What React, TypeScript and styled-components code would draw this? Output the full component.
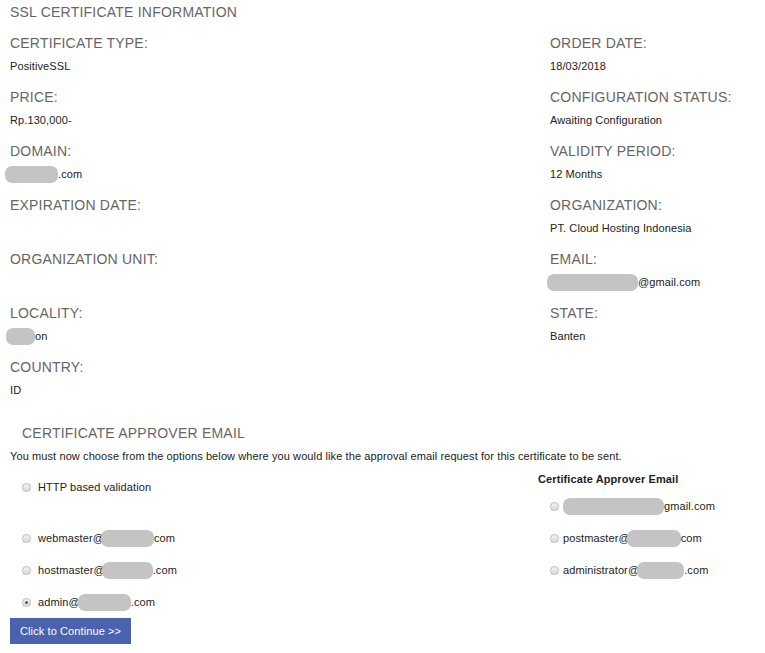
import React from "react";
import styled, { createGlobalStyle } from "styled-components";

const GlobalStyle = createGlobalStyle`
  body {
    margin: 0;
    background: #fff;
    font-family: "Liberation Sans", Arial, sans-serif;
  }
`;

type Field = { label: string; value?: React.ReactNode };

// grey smudge that hides private parts of the text
const Blur: React.FC<{ w: number; shift?: number }> = ({ w, shift = 0 }) => (
  <Redact style={{ width: w, marginLeft: shift }} />
);

const left: Field[] = [
  { label: "CERTIFICATE TYPE:", value: "PositiveSSL" },
  { label: "PRICE:", value: "Rp.130,000-" },
  { label: "DOMAIN:", value: <><Blur w={53} shift={-5} />.com</> },
  { label: "EXPIRATION DATE:" },
  { label: "ORGANIZATION UNIT:" },
  { label: "LOCALITY:", value: <><Blur w={29} shift={-4} />on</> },
  { label: "COUNTRY:", value: "ID" },
];

const right: Field[] = [
  { label: "ORDER DATE:", value: "18/03/2018" },
  { label: "CONFIGURATION STATUS:", value: "Awaiting Configuration" },
  { label: "VALIDITY PERIOD:", value: "12 Months" },
  { label: "ORGANIZATION:", value: "PT. Cloud Hosting Indonesia" },
  { label: "EMAIL:", value: <><Blur w={91} shift={-3} />@gmail.com</> },
  { label: "STATE:", value: "Banten" },
];

const FieldBlock: React.FC<Field> = ({ label, value }) => (
  <Block>
    <Label>{label}</Label>
    <Value>{value}</Value>
  </Block>
);

const Option: React.FC<{
  checked?: boolean;
  gap: number;
  children: React.ReactNode;
}> = ({ checked, gap, children }) => (
  <OptionRow $gap={gap}>
    <Radio $checked={checked} />
    <span>{children}</span>
  </OptionRow>
);

const App: React.FC = () => {
  const rows = Math.max(left.length, right.length);
  return (
    <Page>
      <GlobalStyle />
      <Title>SSL CERTIFICATE INFORMATION</Title>
      <InfoGrid>
        {Array.from({ length: rows }).map((_, i) => (
          <React.Fragment key={i}>
            {left[i] ? <FieldBlock {...left[i]} /> : <div />}
            {right[i] ? <FieldBlock {...right[i]} /> : <div />}
          </React.Fragment>
        ))}
      </InfoGrid>

      <SubTitle>CERTIFICATE APPROVER EMAIL</SubTitle>
      <Intro>
        You must now choose from the options below where you would like the
        approval email request for this certificate to be sent.
      </Intro>

      <ApproverGrid>
        <Cell $top={3}>
          <Option gap={7}>HTTP based validation</Option>
        </Cell>
        <Cell>
          <ColHeading>Certificate Approver Email</ColHeading>
          <Option gap={4}>
            <Blur w={101} />gmail.com
          </Option>
        </Cell>
        <Option gap={7}>
          webmaster@<Blur w={53} shift={-3} />com
        </Option>
        <Option gap={4}>
          postmaster@<Blur w={54} shift={-3} />com
        </Option>
        <Option gap={7}>
          hostmaster@<Blur w={51} shift={-3} />.com
        </Option>
        <Option gap={4}>
          administrator@<Blur w={47} shift={-2} />.com
        </Option>
        <Option gap={7} checked>
          admin@<Blur w={53} shift={-2} />.com
        </Option>
        <div />
      </ApproverGrid>

      <Button type="button">Click to Continue &gt;&gt;</Button>
    </Page>
  );
};

export default App;

const Page = styled.div`
  padding: 2px 0 20px 10px;
  width: 755px;
  color: #222;
`;

const Title = styled.div`
  font-size: 14px;
  line-height: 20px;
  letter-spacing: 0.22px;
  color: #666;
  margin-bottom: 11px;
`;

const InfoGrid = styled.div`
  display: grid;
  grid-template-columns: 540px 1fr;
`;

const Block = styled.div`
  padding-bottom: 12px;
`;

const Label = styled.div`
  font-size: 14px;
  line-height: 20px;
  letter-spacing: 0.2px;
  color: #666;
  margin-bottom: 4px;
`;

const Value = styled.div`
  font-size: 11px;
  line-height: 18px;
  letter-spacing: 0.1px;
  min-height: 18px;
  color: #222;
  display: flex;
  align-items: center;
`;

const Redact = styled.span`
  display: inline-block;
  height: 17px;
  background: #c4c4c4;
  border-radius: 7px;
  vertical-align: middle;
  flex: none;
`;

const SubTitle = styled.div`
  font-size: 14px;
  line-height: 20px;
  letter-spacing: 0.22px;
  color: #666;
  padding-left: 12px;
  margin-top: 12px;
`;

const Intro = styled.p`
  margin: 5px 0 0;
  font-size: 11px;
  line-height: 16px;
  letter-spacing: 0.1px;
  color: #222;
`;

const ApproverGrid = styled.div`
  display: grid;
  grid-template-columns: 528px 1fr;
  margin-top: 4px;
`;

const Cell = styled.div<{ $top?: number }>`
  padding-top: ${(p) => p.$top ?? 0}px;
`;

const ColHeading = styled.div`
  font-size: 11px;
  font-weight: bold;
  line-height: 22px;
  letter-spacing: 0.1px;
  color: #222;
`;

const OptionRow = styled.div<{ $gap: number }>`
  display: flex;
  align-items: center;
  height: 32px;
  padding-left: 12px;
  gap: ${(p) => p.$gap}px;
  font-size: 11px;
  letter-spacing: 0.1px;
  color: #222;

  span {
    display: flex;
    align-items: center;
  }
`;

const Radio = styled.span<{ $checked?: boolean }>`
  position: relative;
  width: 9px;
  height: 9px;
  border-radius: 50%;
  border: 1px solid #b9b9b9;
  background: linear-gradient(#f4f4f4, #dcdcdc);
  box-sizing: border-box;
  flex: none;

  &::after {
    content: "";
    display: ${(p) => (p.$checked ? "block" : "none")};
    position: absolute;
    left: 2px;
    top: 2px;
    width: 3px;
    height: 3px;
    border-radius: 50%;
    background: #555;
  }
`;

const Button = styled.button`
  display: block;
  height: 26px;
  padding: 0 10px;
  border: none;
  background: #4b62ae;
  color: #fff;
  font-family: "Liberation Sans", Arial, sans-serif;
  font-size: 11px;
  letter-spacing: 0.1px;
  cursor: pointer;
`;
